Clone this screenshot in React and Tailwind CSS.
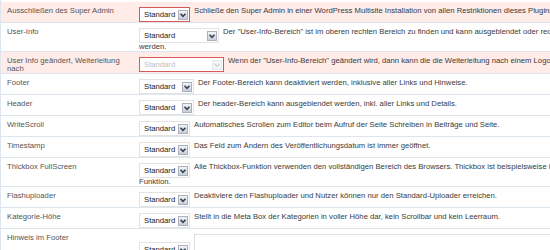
import React from 'react'

const rows = [
  { label: 'Ausschließen des Super Admin', w: 'w-[51px]', error: true,
    desc: 'Schließe den Super Admin in einer WordPress Multisite Installation von allen Restriktionen dieses Plugins aus.' },
  { label: 'User-Info', w: 'w-[80px]',
    desc: <>Der "User-Info-Bereich" ist im oberen rechten Bereich zu finden und kann ausgeblendet oder reduziert<br />werden.</> },
  { label: <>User Info geändert, Weiterleitung<br />nach</>, w: 'w-[85px]', error: true, disabled: true,
    desc: 'Wenn der "User-Info-Bereich" geändert wird, dann kann die die Weiterleitung nach einem Logout gesetzt werden.' },
  { label: 'Footer', w: 'w-[55px]', desc: 'Der Footer-Bereich kann deaktiviert werden, inklusive aller Links und Hinweise.' },
  { label: 'Header', w: 'w-[55px]', desc: 'Der header-Bereich kann ausgeblendet werden, inkl. aller Links und Details.' },
  { label: 'WriteScroll', w: 'w-[51px]', desc: 'Automatisches Scrollen zum Editor beim Aufruf der Seite Schreiben in Beiträge und Seite.' },
  { label: 'Timestamp', w: 'w-[51px]', desc: 'Das Feld zum Ändern des Veröffentlichungsdatum ist immer geöffnet.' },
  { label: 'Thickbox FullScreen', w: 'w-[51px]',
    desc: <>Alle Thickbox-Funktion verwenden den vollständigen Bereich des Browsers. Thickbox ist beispielsweise in der Upload-<br />Funktion.</> },
  { label: 'Flashuploader', w: 'w-[51px]', desc: 'Deaktiviere den Flashuploader und Nutzer können nur den Standard-Uploader erreichen.' },
  { label: 'Kategorie-Höhe', w: 'w-[51px]', desc: 'Stellt in die Meta Box der Kategorien in voller Höhe dar, kein Scrollbar und kein Leerraum.' },
]

function Select({ w, error, disabled, className = '' }) {
  return (
    <span className={`inline-flex items-center justify-between align-top h-[15px] mr-[4px] pl-[4px] pr-[1px] bg-white border ${error ? 'border-[#d65a5a]' : 'border-[#e3e3e3]'} ${w} ${className}`}>
      <span className={disabled ? 'text-[#bdbdbd]' : 'text-[#1c1c1c]'}>Standard</span>
      <span className={`flex items-center justify-center w-[10px] h-[10px] border ${disabled ? 'border-[#e6e9ec] bg-[#f3f5f7]' : 'border-[#a9b1bd] bg-gradient-to-b from-[#f2f4f7] to-[#c8cfd9]'}`}>
        <svg width="8" height="8" viewBox="0 0 8 8">
          <path d="M1.5 2.8 L4 5.3 L6.5 2.8" fill="none" stroke={disabled ? '#d4d8dc' : '#36404e'} strokeWidth="1.6" />
        </svg>
      </span>
    </span>
  )
}

export default function App() {
  return (
    <div className="w-[550px] h-[250px] overflow-hidden bg-white" style={{ fontFamily: '"Liberation Sans", Arial, sans-serif' }}>
      <div className="w-[900px] pt-[2px] border-l border-[#dde6ee] text-[7.7px]">
        {rows.map((r, i) => (
          <div key={i} className={`flex border-b border-[#dde6ee] ${r.error ? 'bg-[#ffebe8]' : ''}`}>
            <div className="w-[138px] shrink-0 pl-[6px] pr-[4px] pt-[5px] leading-[8px] text-[#555]">{r.label}</div>
            <div className="flex-1 pt-[5px] leading-[8px] text-[#3a3a3a]">
              <Select w={r.w} error={r.error} disabled={r.disabled} />
              {r.desc}
            </div>
          </div>
        ))}
        <div className="flex">
          <div className="w-[138px] shrink-0 pl-[6px] pt-[5px] leading-[8px] text-[#555]">Hinweis im Footer</div>
          <div className="flex-1 pt-[5px] leading-[8px]">
            <Select w="w-[51px]" className="mt-[8px]" />
            <textarea className="align-top w-[420px] h-[40px] border border-[#dfdfdf] bg-white resize-none" />
          </div>
        </div>
      </div>
    </div>
  )
}
